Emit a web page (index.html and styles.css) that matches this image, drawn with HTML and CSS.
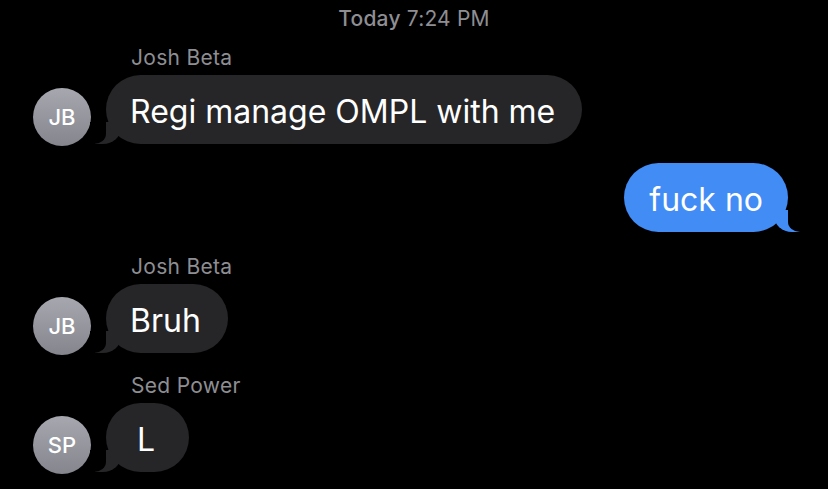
FILE: index.html
```html
<!DOCTYPE html>
<html lang="en">
<head>
    <meta charset="UTF-8">
    <meta name="viewport" content="width=device-width, initial-scale=1.0">
    <title>Messages</title>
    <link rel="stylesheet" href="styles.css">
</head>
<body>
    <div class="chat">
        <div class="stamp"><b>Today</b> 7:24 PM</div>

        <div class="group">
            <div class="name">Josh Beta</div>
            <div class="row">
                <div class="avatar">JB</div>
                <div class="bubble in">Regi manage OMPL with me</div>
            </div>
        </div>

        <div class="row out-row">
            <div class="bubble out">fuck no</div>
        </div>

        <div class="group group-2">
            <div class="name">Josh Beta</div>
            <div class="row">
                <div class="avatar">JB</div>
                <div class="bubble in">Bruh</div>
            </div>
        </div>

        <div class="group group-3">
            <div class="name">Sed Power</div>
            <div class="row">
                <div class="avatar">SP</div>
                <div class="bubble in">L</div>
            </div>
        </div>
    </div>
</body>
</html>
```

FILE: styles.css
```css
body {
    margin: 0;
    padding: 0;
    background: #000;
    font-family: Inter, "Noto Sans", sans-serif;
    color: #fff;
    height: 100vh;
    overflow: hidden;
}
.chat {
    padding: 8px 40px 0 33px;
}
.stamp {
    height: 22px;
    line-height: 22px;
    margin-bottom: 18px;
    text-align: center;
    font-size: 21px;
    letter-spacing: 0.2px;
    color: #8e8e93;
    padding-left: 7px;
}
.stamp b {
    font-weight: 500;
}
.name {
    height: 20px;
    line-height: 20px;
    margin: 0 0 7px 98px;
    font-size: 21px;
    letter-spacing: 0.3px;
    color: #8e8e93;
}
.row {
    display: flex;
    align-items: flex-end;
}
.avatar {
    width: 58px;
    height: 58px;
    border-radius: 50%;
    margin-right: 15px;
    background: linear-gradient(#a6a7af, #84858d);
    display: flex;
    justify-content: center;
    align-items: center;
    font-size: 22px;
    font-weight: 500;
    flex-shrink: 0;
}
.bubble {
    position: relative;
    box-sizing: border-box;
    height: 69px;
    min-width: 83px;
    display: flex;
    align-items: center;
    justify-content: center;
    padding: 4px 27px 0 24px;
    border-radius: 35px;
    font-size: 32px;
    margin-bottom: 2px;
}
.bubble.in {
    background: #262629;
}
.bubble.out {
    background: #428cf5;
    margin-bottom: 0;
    padding: 4px 25px 0;
}
.out-row {
    justify-content: flex-end;
    margin-top: 17px;
}
.group-2 {
    margin-top: 25px;
}
.group-3 {
    margin-top: 21px;
}

/* tails */
.bubble::before,
.bubble::after {
    content: "";
    position: absolute;
    bottom: 0;
    height: 22px;
}
.bubble.in::before {
    left: -11px;
    width: 26px;
    background: #262629;
    border-bottom-right-radius: 18px 16px;
}
.bubble.in::after {
    left: -16px;
    width: 16px;
    background: #000;
    border-bottom-right-radius: 12px 10px;
}
.bubble.out::before {
    right: -12px;
    width: 26px;
    background: #428cf5;
    border-bottom-left-radius: 18px 16px;
}
.bubble.out::after {
    right: -17px;
    width: 17px;
    background: #000;
    border-bottom-left-radius: 12px 10px;
}
```
